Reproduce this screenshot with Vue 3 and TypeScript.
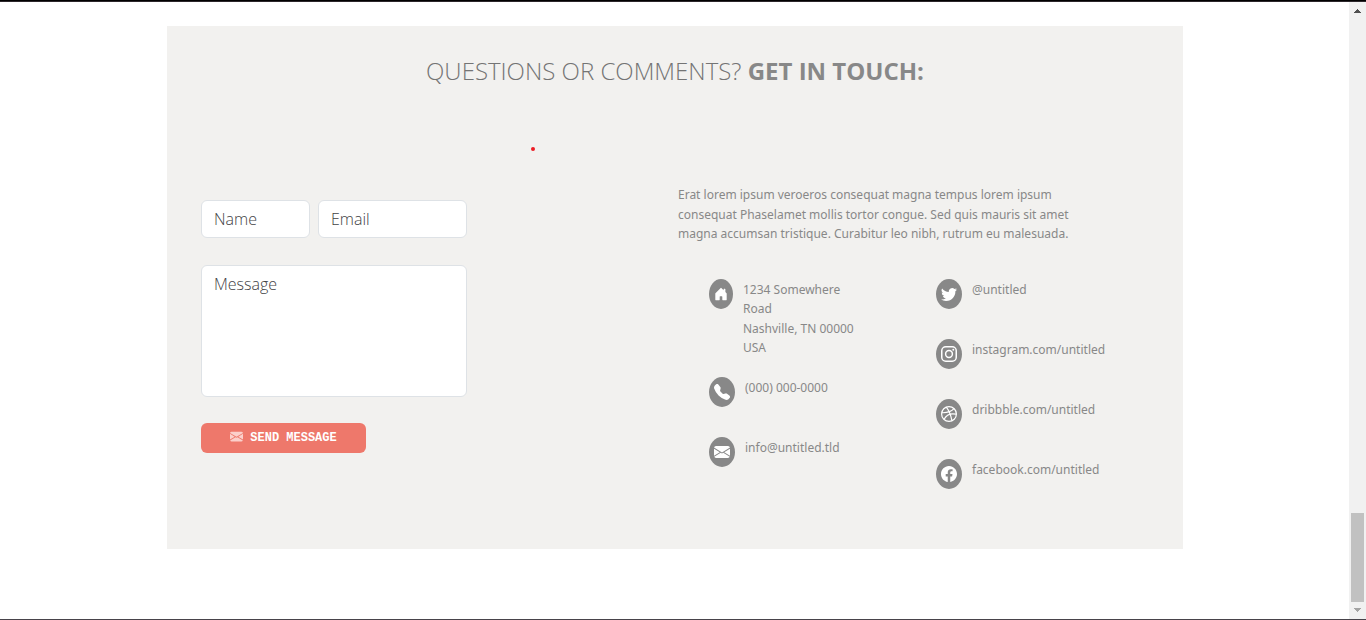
<script setup lang="ts">
import { ref } from 'vue'

type IconName = 'home' | 'phone' | 'mail' | 'twitter' | 'instagram' | 'dribbble' | 'facebook'

interface Contact {
  icon: IconName
  lines: string[]
  href?: string
}

const name = ref('')
const email = ref('')
const message = ref('')

const columns: Contact[][] = [
  [
    { icon: 'home', lines: ['1234 Somewhere', 'Road', 'Nashville, TN 00000', 'USA'] },
    { icon: 'phone', lines: ['(000) 000-0000'], href: '#phone' },
    { icon: 'mail', lines: ['info@untitled.tld'], href: '#mail' },
  ],
  [
    { icon: 'twitter', lines: ['@untitled'], href: '#twitter' },
    { icon: 'instagram', lines: ['instagram.com/untitled'], href: '#instagram' },
    { icon: 'dribbble', lines: ['dribbble.com/untitled'], href: '#dribbble' },
    { icon: 'facebook', lines: ['facebook.com/untitled'], href: '#facebook' },
  ],
]

const envelope =
  'M.05 3.555A2 2 0 0 1 2 2h12a2 2 0 0 1 1.95 1.555L8 8.414.05 3.555ZM0 4.697v7.104l5.803-3.558L0 4.697ZM6.761 8.83l-6.57 4.027A2 2 0 0 0 2 14h12a2 2 0 0 0 1.808-1.144l-6.57-4.027L8 9.586l-1.239-.757Zm3.436-.586L16 11.801V4.697l-5.803 3.546Z'

const solid: Partial<Record<IconName, string>> = {
  home: 'M6.500 14.500v-3.505c0-.245.25-.495.5-.495h2c.25 0 .5.25.5.5v3.500a.5.5 0 0 0 .5.5h4a.5.5 0 0 0 .5-.5v-7a.5.5 0 0 0-.146-.354L13 5.793V2.500a.5.5 0 0 0-.5-.5h-1a.5.5 0 0 0-.5.5v1.293L8.354 1.146a.5.5 0 0 0-.708 0l-6 6A.5.5 0 0 0 1.500 7.500v7a.5.5 0 0 0 .5.5h4a.5.5 0 0 0 .5-.5Z',
  phone:
    'M1.885.511a1.745 1.745 0 0 1 2.61.163L6.29 2.98c.329.423.445.974.315 1.494l-.547 2.19a.678.678 0 0 0 .178.643l2.457 2.457a.678.678 0 0 0 .644.178l2.189-.547a1.745 1.745 0 0 1 1.494.315l2.306 1.794c.829.645.905 1.87.163 2.611l-1.034 1.034c-.74.74-1.846 1.065-2.877.702a18.634 18.634 0 0 1-7.01-4.42 18.634 18.634 0 0 1-4.42-7.009c-.362-1.03-.037-2.137.703-2.877L1.885.511z',
  mail: envelope,
  twitter:
    'M5.026 15c6.038 0 9.341-5.003 9.341-9.334 0-.14 0-.282-.006-.422A6.685 6.685 0 0 0 16 3.542a6.658 6.658 0 0 1-1.889.518 3.301 3.301 0 0 0 1.447-1.817 6.533 6.533 0 0 1-2.087.793A3.286 3.286 0 0 0 7.875 6.03a9.325 9.325 0 0 1-6.767-3.429 3.289 3.289 0 0 0 1.018 4.382A3.323 3.323 0 0 1 .64 6.575v.045a3.288 3.288 0 0 0 2.632 3.218 3.203 3.203 0 0 1-.865.115 3.23 3.23 0 0 1-.614-.057 3.283 3.283 0 0 0 3.067 2.277A6.588 6.588 0 0 1 .78 13.58a6.32 6.32 0 0 1-.78-.045A9.344 9.344 0 0 0 5.026 15z',
  facebook:
    'M16 8.049c0-4.446-3.582-8.05-8-8.05C3.58 0-.002 3.603-.002 8.05c0 4.017 2.926 7.347 6.75 7.951v-5.625h-2.03V8.05H6.75V6.275c0-2.017 1.195-3.131 3.022-3.131.876 0 1.791.157 1.791.157v1.98h-1.009c-.993 0-1.303.621-1.303 1.258v1.51h2.218l-.354 2.326H9.25V16c3.824-.604 6.75-3.934 6.75-7.951z',
}
</script>

<template>
  <div class="window">
    <div class="top-edge"></div>
    <div class="viewport">
      <main class="page">
        <section class="card">
          <h2 class="title">QUESTIONS OR COMMENTS? <strong>GET IN TOUCH:</strong></h2>
          <span class="dot"></span>
          <div class="content">
            <form class="form" @submit.prevent>
              <div class="row">
                <input v-model="name" class="field name" type="text" placeholder="Name" aria-label="Name" />
                <input v-model="email" class="field email" type="email" placeholder="Email" aria-label="Email" />
              </div>
              <textarea v-model="message" class="field message" placeholder="Message" aria-label="Message"></textarea>
              <button class="send" type="submit">
                <svg class="send-icon" viewBox="0 0 16 16" aria-hidden="true"><path :d="envelope" /></svg>
                <span>SEND MESSAGE</span>
              </button>
            </form>
            <div class="info">
              <p class="intro">
                Erat lorem ipsum veroeros consequat magna tempus lorem ipsum<br />
                consequat Phaselamet mollis tortor congue. Sed quis mauris sit amet<br />
                magna accumsan tristique. Curabitur leo nibh, rutrum eu malesuada.
              </p>
              <div class="contacts">
                <ul v-for="(column, i) in columns" :key="i" class="list">
                  <li v-for="item in column" :key="item.icon" class="contact">
                    <span class="badge" :class="item.icon">
                      <svg class="icon" viewBox="0 0 16 16" aria-hidden="true">
                        <path v-if="solid[item.icon]" :d="solid[item.icon]" />
                        <g v-else-if="item.icon === 'instagram'" class="line">
                          <rect x=".75" y=".75" width="14.5" height="14.5" rx="4" />
                          <circle cx="8" cy="8" r="3.400" />
                          <circle class="lens" cx="12.270" cy="3.730" r=".96" />
                        </g>
                        <g v-else class="line thin">
                          <circle cx="8" cy="8" r="7.400" />
                          <path d="M5.300 1.200C8 4.600 9.800 8.600 10.900 14.700" />
                          <path d="M.7 6.700C5.500 6.900 10.200 5.900 13 2.700" />
                          <path d="M3.100 13.300C5.100 9.200 9.400 6.900 15.300 8.200" />
                        </g>
                      </svg>
                    </span>
                    <component :is="item.href ? 'a' : 'address'" class="text" :href="item.href">
                      <span v-for="line in item.lines" :key="line" class="text-line">{{ line }}</span>
                    </component>
                  </li>
                </ul>
              </div>
            </div>
          </div>
        </section>
      </main>
      <div class="scrollbar">
        <button class="arrow" type="button" aria-label="Scroll up">
          <svg viewBox="0 0 17 17" aria-hidden="true"><path fill="#505050" d="M8 7h1v1h1v1h1v1h1v1H5v-1h1V9h1V8h1z" /></svg>
        </button>
        <div class="track"><div class="thumb"></div></div>
        <button class="arrow" type="button" aria-label="Scroll down">
          <svg viewBox="0 0 17 17" aria-hidden="true"><path fill="#a3a3a3" d="M5 6h7v1h-1v1h-1v1H9v1H8V9H7V8H6V7H5z" /></svg>
        </button>
      </div>
    </div>
    <div class="bottom-edge"></div>
  </div>
</template>

<style>
body {
  margin: 0;
  background: #fff;
}
</style>

<style scoped>
* {
  box-sizing: border-box;
}

.window {
  display: flex;
  flex-direction: column;
  min-height: 100vh;
  font-family: 'Noto Sans', 'Open Sans', sans-serif;
  color: #888;
}

.top-edge {
  height: 2px;
  background: #000;
  border-bottom: 1px solid #2c272b;
}

.bottom-edge {
  height: 1px;
  background: #47434a;
}

.viewport {
  flex: 1;
  display: flex;
}

.page {
  flex: 1;
  padding: 24px 166px 70px 167px;
}

.card {
  position: relative;
  min-height: 523px;
  padding: 27px 34px 0;
  background: #f2f1ef;
}

.title {
  margin: 0;
  color: #747474;
  font-family: 'Open Sans', sans-serif;
  font-size: 24px;
  line-height: 36px;
  font-weight: 350;
  text-align: center;
  white-space: nowrap;
}

.title strong {
  color: #888;
  font-weight: 700;
}

.dot {
  position: absolute;
  left: 364px;
  top: 121px;
  width: 4px;
  height: 4px;
  border-radius: 50%;
  background: #ed1c24;
}

.content {
  display: grid;
  grid-template-columns: 1fr 1fr;
  gap: 6px;
  padding-top: 96px;
}

.form {
  display: flex;
  flex-direction: column;
  align-items: flex-start;
  width: 266px;
  padding-top: 15px;
}

.row {
  display: flex;
  gap: 8px;
  width: 100%;
  margin-bottom: 27px;
}

.field {
  min-width: 0;
  height: 38px;
  margin: 0;
  padding: 6px 12px;
  border: 1px solid #dee2e6;
  border-radius: 6px;
  background: #fff;
  color: #212529;
  font-family: 'Open Sans', sans-serif;
  font-size: 16px;
  font-weight: 350;
  line-height: 24px;
  resize: none;
  outline: none;
}

.field::placeholder {
  color: #3f4245;
  opacity: 1;
}

.name {
  width: 109px;
}

.email {
  flex: 1;
}

.message {
  width: 100%;
  height: 132px;
  margin-bottom: 26px;
}

.send {
  display: flex;
  align-items: center;
  justify-content: center;
  gap: 7px;
  width: 165px;
  height: 30px;
  padding: 0;
  border: 0;
  border-radius: 6px;
  background: #ee786b;
  color: #fff;
  font-family: 'Courier New', 'Liberation Mono', monospace;
  font-size: 12px;
  font-weight: 700;
}

.send-icon {
  width: 13px;
  height: 13px;
  margin-bottom: 4px;
  fill: #fbd0cb;
}

.intro {
  margin: 0 0 35px;
  font-size: 12px;
  line-height: 1.625;
  white-space: nowrap;
}

.contacts {
  display: grid;
  grid-template-columns: 227px 1fr;
  padding-left: 31px;
}

.list {
  display: flex;
  flex-direction: column;
  gap: 20px;
  margin: 0;
  padding: 0;
  list-style: none;
}

.contact {
  display: flex;
  align-items: flex-start;
  gap: 10px;
  min-height: 40px;
}

.badge {
  display: flex;
  align-items: center;
  justify-content: center;
  flex: none;
  width: 26px;
  height: 30px;
  border-radius: 50%;
  background: #888;
}

.badge.home {
  width: 24px;
}

.icon {
  width: 16px;
  height: 16px;
  fill: #fff;
}

.home .icon {
  width: 14px;
}

.line {
  fill: none;
  stroke: #fff;
  stroke-width: 1.5;
}

.thin {
  stroke-width: 1.2;
}

.lens {
  fill: #fff;
  stroke: none;
}

.text {
  margin: 1px 0 -1px;
  color: inherit;
  font-size: 12px;
  line-height: 1.625;
  font-style: normal;
  text-decoration: none;
  white-space: nowrap;
}

.text-line {
  display: block;
}

.scrollbar {
  display: flex;
  flex-direction: column;
  width: 17px;
  background: #f1f1f1;
}

.arrow {
  display: block;
  height: 17px;
  padding: 0;
  border: 0;
  background: none;
}

.arrow svg {
  display: block;
  width: 17px;
  height: 17px;
}

.track {
  flex: 1;
  display: flex;
  flex-direction: column;
  justify-content: flex-end;
  padding: 0 2px;
}

.thumb {
  height: 89px;
  background: #c1c1c1;
}
</style>
